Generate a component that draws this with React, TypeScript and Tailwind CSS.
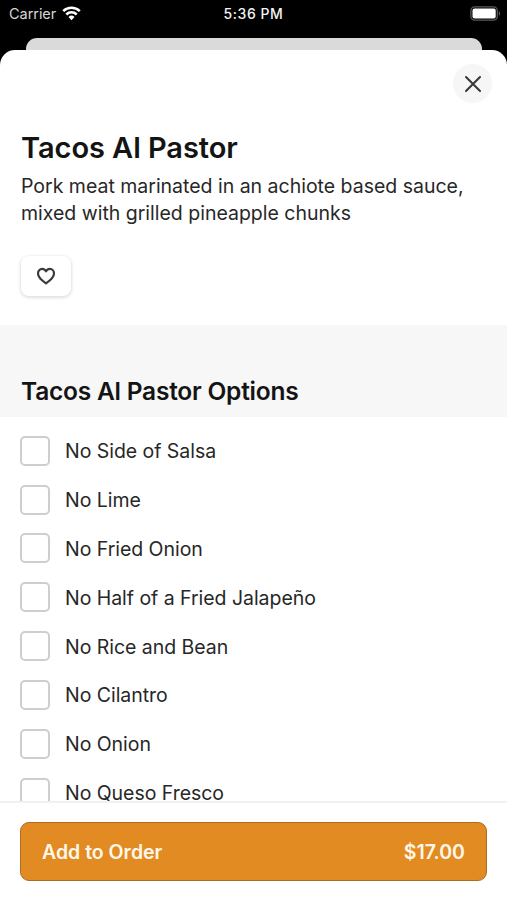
import { useState } from 'react';

const OPTIONS = [
  'No Side of Salsa',
  'No Lime',
  'No Fried Onion',
  'No Half of a Fried Jalapeño',
  'No Rice and Bean',
  'No Cilantro',
  'No Onion',
  'No Queso Fresco',
];

function StatusBar() {
  return (
    <div className="h-[38px] shrink-0 grid grid-cols-3 items-start text-[#f4f4f4]">
      <div className="flex items-center gap-[6px] pl-[9px] h-[27px]">
        <span className="text-[14.5px] tracking-[-0.05px] text-[#d6d6d6]">Carrier</span>
        <svg width="19" height="15" viewBox="0 0 19 15" fill="none" stroke="#fff" strokeWidth="2.5">
          <path d="M1.2 5.2a11.8 11.8 0 0 1 16.6 0" />
          <path d="M4.3 8.5a7.4 7.4 0 0 1 10.4 0" />
          <path d="M9.5 14.2 6.5 11a4.3 4.3 0 0 1 6 0Z" fill="#fff" stroke="none" />
        </svg>
      </div>
      <div className="h-[27px] flex items-center justify-center text-[14px] font-medium tracking-[0.55px]">
        5:36 PM
      </div>
      <div className="h-[27px] flex items-center justify-end pr-[6px]">
        <svg width="31" height="15" viewBox="0 0 31 15">
          <rect x="0.9" y="0.9" width="26.4" height="13.2" rx="3.8" fill="none" stroke="#5a5a5a" strokeWidth="1.3" />
          <rect x="2.5" y="2.5" width="23.2" height="10" rx="2" fill="#fff" />
          <path d="M28.8 5.2c1.8.6 1.8 4 0 4.6Z" fill="#5a5a5a" />
        </svg>
      </div>
    </div>
  );
}

interface OptionRowProps {
  label: string;
  checked: boolean;
  onToggle: () => void;
}

function OptionRow({ label, checked, onToggle }: OptionRowProps) {
  return (
    <button
      type="button"
      role="checkbox"
      aria-checked={checked}
      onClick={onToggle}
      className="h-[48.85px] shrink-0 flex items-center gap-[15px] text-left"
    >
      <span
        className={`size-[30px] shrink-0 rounded-[5px] border-2 border-[#cecece] ${checked ? 'bg-[#e38b23]' : 'bg-white'}`}
      />
      <span className="pt-[2px] text-[19.5px] leading-[27px] tracking-[-0.04px] text-[#272727]">{label}</span>
    </button>
  );
}

export default function App() {
  const [selected, setSelected] = useState<string[]>([]);
  const [liked, setLiked] = useState(false);

  const toggle = (label: string) => {
    setSelected((prev) => (prev.includes(label) ? prev.filter((l) => l !== label) : [...prev, label]));
  };

  return (
    <div className="h-[900px] w-full flex flex-col bg-black overflow-hidden font-['Inter',sans-serif]">
      <StatusBar />
      <div className="ml-[26px] mr-[25px] h-3 shrink-0 bg-[#dadada] rounded-t-[11px]" />

      <div className="flex-1 min-h-0 flex flex-col bg-white rounded-t-[15px] overflow-hidden">
        <div className="h-[275px] shrink-0 flex flex-col px-[21px] pt-[14px]">
          <button
            type="button"
            aria-label="Close"
            className="self-end -mr-[6px] size-[39px] rounded-full bg-[#f6f6f6] flex items-center justify-center"
          >
            <svg width="18" height="18" viewBox="0 0 18 18" stroke="#3a3a3a" strokeWidth="2.1" strokeLinecap="round">
              <path d="m2 2 14 14M16 2 2 16" />
            </svg>
          </button>
          <h1 className="mt-[27px] text-[29px] leading-[36px] font-semibold tracking-[-0.06px] text-[#141414]">
            Tacos Al Pastor
          </h1>
          <p className="mt-[7px] text-[19.5px] leading-[27px] tracking-[-0.01px] text-[#272727]">
            Pork meat marinated in an achiote based sauce, mixed with grilled pineapple chunks
          </p>
          <button
            type="button"
            aria-label="Favorite"
            aria-pressed={liked}
            onClick={() => setLiked(!liked)}
            className="mt-[29px] w-[50px] h-[40px] rounded-[8px] bg-white shadow-[0_1px_3px_1px_rgba(0,0,0,0.12)] flex items-center justify-center"
          >
            <svg width="20" height="18" viewBox="0 0 20 18" fill={liked ? '#3a3a3a' : 'none'} stroke="#3a3a3a" strokeWidth="2.2" strokeLinejoin="round">
              <path d="M10 16.3C7 14.2 2 10.6 2 6.4 2 3.8 3.8 1.9 6.1 1.9c1.6 0 3.1.9 3.9 2.4.8-1.5 2.3-2.4 3.9-2.4C16.2 1.9 18 3.8 18 6.4c0 4.2-5 7.8-8 9.9Z" />
            </svg>
          </button>
        </div>

        <div className="h-[92px] shrink-0 bg-[#f7f7f7] px-[21px] pt-[50px]">
          <h2 className="text-[24.5px] leading-[32px] font-semibold tracking-[-0.22px] text-[#141414]">
            Tacos Al Pastor Options
          </h2>
        </div>

        <div className="flex-1 min-h-0 overflow-hidden flex flex-col pl-5 pt-[9.3px]">
          {OPTIONS.map((label) => (
            <OptionRow key={label} label={label} checked={selected.includes(label)} onToggle={() => toggle(label)} />
          ))}
        </div>

        <div className="h-[99px] shrink-0 border-t-2 border-[#f1f1f1] bg-white px-5 pt-[19px]">
          <button
            type="button"
            className="w-full h-[59px] rounded-[9px] border border-[#a96c25] bg-[#e38b23] px-[21px] flex items-center justify-between text-[19.5px] font-semibold text-[#fff8ea]"
          >
            <span className="pt-[2px]">Add to Order</span>
            <span className="pt-[2px]">$17.00</span>
          </button>
        </div>
      </div>
    </div>
  );
}
